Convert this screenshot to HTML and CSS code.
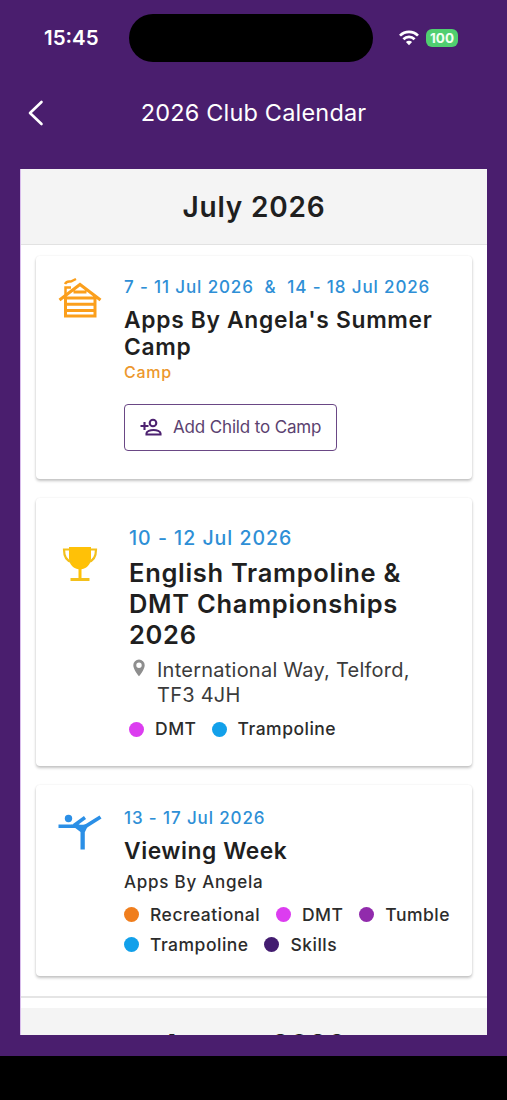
FILE: index.html
```html
<!DOCTYPE html>
<html lang="en">
<head>
<meta charset="utf-8">
<title>2026 Club Calendar</title>
<link rel="stylesheet" href="styles.css">
</head>
<body>
<div class="phone">
  <header class="status">
    <span class="clock">15:45</span>
    <div class="island"></div>
    <svg class="wifi" viewBox="0 0 20 16" width="20" height="16" fill="none" stroke="#fff" stroke-width="2.7">
      <path d="M1 5.6C6 .6 14 .6 19 5.6M4.4 9.2c3.2-3.2 8-3.2 11.2 0"/>
      <path d="M10 15.2 6.9 12.1c1.8-1.7 4.4-1.7 6.2 0z" fill="#fff" stroke="none"/>
    </svg>
    <span class="battery">100</span>
  </header>
  <nav class="nav">
    <svg class="back" viewBox="0 0 16 26" width="16" height="26" fill="none" stroke="#fff" stroke-width="2.6" stroke-linecap="round" stroke-linejoin="round"><path d="M13.500 2 2 13l11.500 11"/></svg>
    <h1 class="nav-title">2026 Club Calendar</h1>
  </nav>
  <main class="panel">
    <h2 class="month">July 2026</h2>
    <section class="events">
      <article class="card camp">
        <svg class="icon" viewBox="0 0 44 42" width="44" height="42" fill="none" stroke="#fb9f1c" stroke-width="3">
          <path d="M1.500 23 22 7.500 42.500 23M7.500 20v19h29.500V20M7.500 21h29.500M7.500 27.200h29.500M7.500 33.400h29.500M15.500 15h13"/>
          <path d="M7.500 19v-8.500h5.500M7 7c2.500-4.500 5-1.500 7-3l4-2" stroke-width="2.500"/>
        </svg>
        <div class="body">
          <p class="date">7 - 11 Jul 2026 &nbsp;&amp;&nbsp; 14 - 18 Jul 2026</p>
          <h3 class="title">Apps By Angela's Summer Camp</h3>
          <p class="kind">Camp</p>
          <button class="add">
            <svg viewBox="0 0 24 20" width="24" height="20" fill="none" stroke="#4d2270" stroke-width="2.100"><path d="M1.500 9h8M5.500 5v8"/><circle cx="14" cy="6" r="3.300"/><path d="M7.500 17.500v-1.300c0-2 3.700-3.200 7-3.200s7 1.200 7 3.200v1.300z"/></svg>
            <span class="add-label">Add Child to Camp</span>
          </button>
        </div>
      </article>
      <article class="card comp">
        <svg class="icon" viewBox="0 0 44 42" width="44" height="42">
          <path d="M11 4h22v11c0 6-4 10.500-9.500 11.300V35h-3v-8.700C15 25.500 11 21 11 15z" fill="#ffc107"/>
          <path d="M12 6.500H6c0 7.500 2.500 11.500 8 12.500M32 6.500h6c0 7.500-2.500 11.500-8 12.500" fill="none" stroke="#f3c01c" stroke-width="2.200"/>
          <path d="M12.500 36.500h19" stroke="#f3c01c" stroke-width="3"/>
        </svg>
        <div class="body">
          <p class="date">10 - 12 Jul 2026</p>
          <h3 class="title">English Trampoline &amp; DMT Championships 2026</h3>
          <div class="place">
            <svg viewBox="0 0 12 18" width="12" height="18" fill="#8e8e8e" fill-rule="evenodd"><path d="M6 .5A5.700 5.700 0 0 0 .3 6.200C.3 10.500 6 17.300 6 17.300s5.700-6.800 5.700-11.100A5.700 5.700 0 0 0 6 .5zm0 3a2.700 2.700 0 1 1 0 5.400 2.700 2.700 0 0 1 0-5.400z"/></svg>
            <span class="address">International Way, Telford, TF3 4JH</span>
          </div>
          <div class="tags">
            <span class="tag"><i class="dot pink"></i>DMT</span>
            <span class="tag"><i class="dot blue"></i>Trampoline</span>
          </div>
        </div>
      </article>
      <article class="card week">
        <svg class="icon" viewBox="0 0 44 42" width="44" height="42" fill="none" stroke="#2b8fe6">
          <circle cx="10.500" cy="10.500" r="3.700" fill="#2b8fe6" stroke="none"/>
          <path d="M.5 18.300h21M16 17.500 27 9.500" stroke-width="3.500"/>
          <path d="M23 19.800 28 18 42.500 9" stroke-width="3.800"/>
          <path d="M13 16.700h17.500l-3.700 7.500V41.500h-4.300V24z" fill="#2b8fe6" stroke="none"/>
        </svg>
        <div class="body">
          <p class="date">13 - 17 Jul 2026</p>
          <h3 class="title">Viewing Week</h3>
          <p class="club">Apps By Angela</p>
          <div class="tags">
            <span class="tag"><i class="dot orange"></i>Recreational</span>
            <span class="tag"><i class="dot pink"></i>DMT</span>
            <span class="tag"><i class="dot violet"></i>Tumble</span>
            <span class="tag"><i class="dot blue"></i>Trampoline</span>
            <span class="tag"><i class="dot indigo"></i>Skills</span>
          </div>
        </div>
      </article>
    </section>
    <h2 class="month next">August 2026</h2>
  </main>
</div>
</body>
</html>
```
FILE: styles.css
```css
* { box-sizing: border-box; margin: 0; padding: 0; }
body { background: #000; font-family: Inter, "Liberation Sans", sans-serif; color: #1f1f1f; }
.phone { width: 507px; height: 1056px; background: #4a1e6e; overflow: hidden; }

.status { display: flex; align-items: center; height: 76px; padding-left: 44px; color: #fff; }
.clock { width: 85px; font-size: 20.5px; font-weight: 600; line-height: 24px; }
.island { width: 244px; height: 48px; border-radius: 24px; background: #000; }
.wifi { margin: 0 7px 0 26px; }
.battery { width: 32px; height: 18px; border-radius: 6px; background: #50cf70; color: #f1fff3; font-size: 13.500px; font-weight: 700; line-height: 18px; text-align: center; }

.nav { display: flex; align-items: center; height: 73px; padding-left: 28px; color: #fff; }
.nav-title { width: 419px; text-align: center; font-size: 23.500px; font-weight: 400; line-height: 30px; letter-spacing: .18px; }

.panel { width: 467px; height: 866px; margin: 20px 0 0 20px; background: #fff; overflow: hidden; border-left: 1px solid #d9bdec; }
.month { height: 76px; background: #f4f4f4; border-bottom: 1px solid #e2e2e2; text-align: center; font-size: 28px; font-weight: 600; line-height: 76px; letter-spacing: .8px; }
.events { display: flex; flex-direction: column; gap: 19px; padding: 11px 15px 20px; border-bottom: 2px solid #e5e5e5; }
.next { margin-top: 10px; border: 0; line-height: 74px; }

.card { display: flex; border-radius: 4px; box-shadow: 0 2px 3px rgba(0,0,0,.23), 0 0 2px rgba(0,0,0,.08); }
.icon { flex: none; margin-left: 22px; }
.body { flex: 1; }
.date { color: #2e8fd6; font-weight: 500; }
.title { font-weight: 600; }
.camp { height: 223px; padding-top: 20px; }
.camp .icon { margin-top: 1px; }
.week .icon { margin-top: 1px; }
.camp .body, .week .body { padding-left: 22px; }
.camp .date, .week .date { font-size: 17px; line-height: 22px; letter-spacing: .87px; }
.camp .title { width: 325px; margin-top: 8px; font-size: 22.800px; line-height: 27.300px; letter-spacing: .7px; }
.kind { margin-top: 1px; color: #ec972d; font-size: 16px; font-weight: 500; line-height: 20px; letter-spacing: .7px; }
.add { display: flex; align-items: center; gap: 10px; width: 213px; height: 47px; margin: 22px 0 0 -.5px; padding-left: 14.500px; border: 1.500px solid #6a4785; border-radius: 4px; background: #fff; color: #5b4270; font: 400 17px/24px Inter, "Liberation Sans", sans-serif; letter-spacing: -.15px; white-space: nowrap; }

.comp { height: 268px; padding-top: 28px; }
.comp .icon { margin-top: 17px; }
.comp .body { padding-left: 27px; }
.comp .date { font-size: 19.500px; line-height: 24px; letter-spacing: 1px; }
.comp .title { width: 300px; margin-top: 8px; font-size: 25.500px; line-height: 30.800px; letter-spacing: .7px; }
.place { display: flex; gap: 12px; margin-top: 8px; padding-left: 4px; }
.place svg { flex: none; margin-top: 1px; }
.address { width: 270px; color: #3b3b3b; font-size: 20px; line-height: 24.500px; letter-spacing: .24px; }
.tags { display: flex; flex-wrap: wrap; column-gap: 15.800px; color: #2c2c2c; font-size: 17.500px; font-weight: 500; line-height: 29.500px; letter-spacing: .5px; }
.tag { display: flex; align-items: center; gap: 11px; white-space: nowrap; }
.comp .tags { margin-top: 7px; column-gap: 15px; }
.dot { width: 15px; height: 15px; border-radius: 50%; }
.pink { background: #dc3df0; }
.blue { background: #12a0ea; }
.orange { background: #f07e1d; }
.violet { background: #912bac; }
.indigo { background: #431c70; }

.week { height: 191px; padding-top: 22px; }
.week .title { margin-top: 8px; font-size: 22.800px; line-height: 28px; letter-spacing: .55px; }
.club { margin-top: 6px; color: #2c2c2c; font-size: 17px; font-weight: 500; line-height: 22px; letter-spacing: .75px; }
.week .tags { margin-top: 7px; }
```
